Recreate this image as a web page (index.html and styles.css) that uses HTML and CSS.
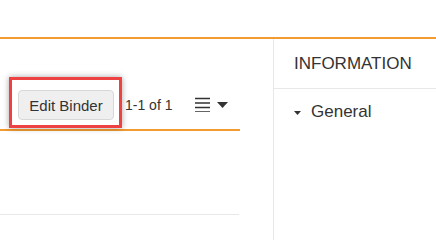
FILE: index.html
```html
<!DOCTYPE html>
<html>
<head>
    <meta charset="UTF-8">
    <title>binder</title>
    <link rel="stylesheet" href="styles.css">
</head>
<body>

<div class="m-top"></div>
<div class="m-main">
    <div class="m-left">
        <div class="u-list">
            <div class="u-bar">
                <div class="u-mark">
                    <a href="javascript:;" class="u-btn">Edit Binder</a>
                </div>
                <span class="u-count">1-1 of 1</span>
                <a href="javascript:;" class="u-menu">
                    <svg width="15" height="15" viewBox="0 0 15 15">
                        <path d="M0 1.5H15M0 6H15M0 10.5H15M0 15H15" stroke="#333" stroke-width="1.6"/>
                    </svg>
                    <svg class="caret" width="11" height="6" viewBox="0 0 11 6">
                        <polygon points="0,0 11,0 5.5,6" fill="#333"/>
                    </svg>
                </a>
            </div>
            <div class="u-row"></div>
        </div>
    </div>
    <div class="m-right">
        <div class="u-head">INFORMATION</div>
        <div class="u-sec">
            <svg width="7" height="4" viewBox="0 0 7 4">
                <polygon points="0,0 7,0 3.5,4" fill="#333"/>
            </svg>
            <span>General</span>
        </div>
    </div>
</div>

</body>
</html>
```

FILE: styles.css
```css
*{ margin: 0; padding: 0; box-sizing: border-box; text-decoration: none;}
body {font-family: "Liberation Sans", Arial, sans-serif;color: #333;background: #fff;}
.m-top {height: 39px;border-bottom: 2px solid #f39a30;}
.m-main {display: flex;height: 201px;}
.m-left {width: 274px;border-right: 1px solid #e8e8e8;}
.u-list {width: 240px;}
.u-bar {display: flex;align-items: center;padding: 38px 0 1px 9px;border-bottom: 2px solid #f39a30;}
.u-mark {border: 3px solid #ee4242;padding: 10px 5px 5px 6px;box-shadow: 0 0 6px rgba(0,0,0,.35);}
.u-btn {display: flex;align-items: center;justify-content: center;width: 96px;height: 30px;background: #efefef;border: 1px solid #d8d8d8;border-radius: 4px;font-size: 15px;color: #333;}
.u-count {margin: 4px 0 0 3px;font-size: 14px;}
.u-menu {display: flex;align-items: center;margin: 4px 0 0 23px;}
.u-menu .caret {margin-left: 7px;}
.u-row {height: 84px;border-bottom: 1px solid #e8e8e8;margin-right: 1px;}
.m-right {flex: 1;}
.u-head {height: 50px;line-height: 50px;padding-left: 20px;font-size: 17px;border-bottom: 1px solid #e8e8e8;}
.u-sec {display: flex;align-items: center;padding: 13px 0 0 20px;font-size: 17px;line-height: 20px;}
.u-sec svg {margin-right: 10px;margin-top: 2px;}
```
